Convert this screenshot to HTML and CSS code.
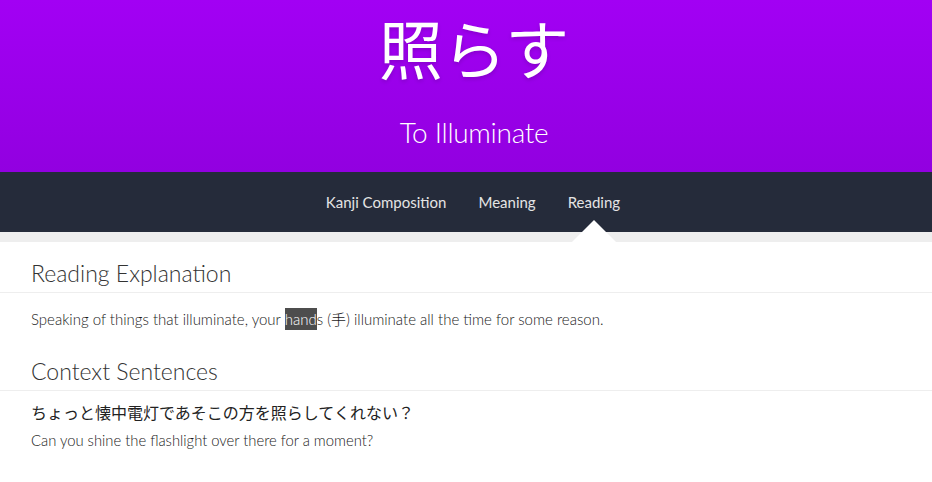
FILE: index.html
```html
<!DOCTYPE html>
<html lang="en">
<head>
    <meta charset="UTF-8">
    <meta name="viewport" content="width=device-width, initial-scale=1.0">
    <title>照らす - To Illuminate</title>
    <link rel="stylesheet" href="styles.css">
</head>
<body>
    <header class="hero">
        <h1 class="hero-kanji" lang="ja">照らす</h1>
        <p class="hero-meaning">To Illuminate</p>
    </header>
    <nav class="tabs">
        <a href="#composition" class="tab">Kanji Composition</a>
        <a href="#meaning" class="tab">Meaning</a>
        <a href="#reading" class="tab active">Reading</a>
    </nav>
    <div class="strip"></div>
    <main class="content">
        <section id="reading" class="block">
            <h2>Reading Explanation</h2>
            <p class="explain">Speaking of things that illuminate, your <mark class="hl">hand</mark>s (<span lang="ja">手</span>) illuminate all the time for some reason.</p>
        </section>
        <section class="block">
            <h2>Context Sentences</h2>
            <p class="jp" lang="ja">ちょっと懐中電灯であそこの方を照らしてくれない？</p>
            <p class="en">Can you shine the flashlight over there for a moment?</p>
        </section>
    </main>
</body>
</html>
```

FILE: styles.css
```css
body {
    margin: 0;
    font-family: 'Lato', 'Noto Sans CJK JP', sans-serif;
    color: #333333;
    background-color: #ffffff;
}
.hero {
    height: 172px;
    padding-left: 16px;
    background: linear-gradient(to bottom, #a200f4, #9200e0);
    color: #ffffff;
    text-align: center;
    overflow: hidden;
}
.hero-kanji {
    margin: 0;
    padding-top: 6px;
    font-family: 'Noto Sans CJK JP', sans-serif;
    font-weight: 400;
    font-size: 64px;
    line-height: 80px;
    text-shadow: 0 2px 4px rgba(0, 0, 0, 0.15);
}
.hero-meaning {
    margin: 24px 0 0;
    font-weight: 300;
    font-size: 28px;
    line-height: 44px;
    letter-spacing: -0.3px;
}
.tabs {
    height: 60px;
    background-color: #252b3a;
    display: flex;
    justify-content: center;
    align-items: center;
    gap: 32px;
    padding-left: 14px;
}
.tab {
    position: relative;
    color: #e4e4e4;
    text-decoration: none;
    font-size: 15px;
    line-height: 60px;
}
.tab.active::after {
    content: '';
    position: absolute;
    left: 50%;
    bottom: -10px;
    margin-left: -22px;
    border-left: 22px solid transparent;
    border-right: 22px solid transparent;
    border-bottom: 22px solid #ffffff;
}
.strip {
    height: 10px;
    background-color: #eeeeee;
}
.content {
    padding-top: 16px;
}
.block h2 {
    margin: 0;
    padding: 0 31px 4px;
    font-weight: 300;
    font-size: 23px;
    line-height: 30px;
    color: #333333;
    border-bottom: 1px solid #eeeeee;
}
.explain {
    margin: 14px 31px 25px;
    font-weight: 300;
    font-size: 15px;
    line-height: 24px;
    color: #1a1a1a;
}
.hl {
    background-color: #4d4d4d;
    color: #ffffff;
    padding: 2px 0;
}
.jp {
    margin: 10px 31px 0;
    font-family: 'Noto Sans CJK JP', sans-serif;
    font-size: 16px;
    line-height: 22px;
    color: #222222;
}
.en {
    margin: 7px 31px 0;
    font-weight: 300;
    font-size: 14.8px;
    line-height: 20px;
    color: #1a1a1a;
}
```
